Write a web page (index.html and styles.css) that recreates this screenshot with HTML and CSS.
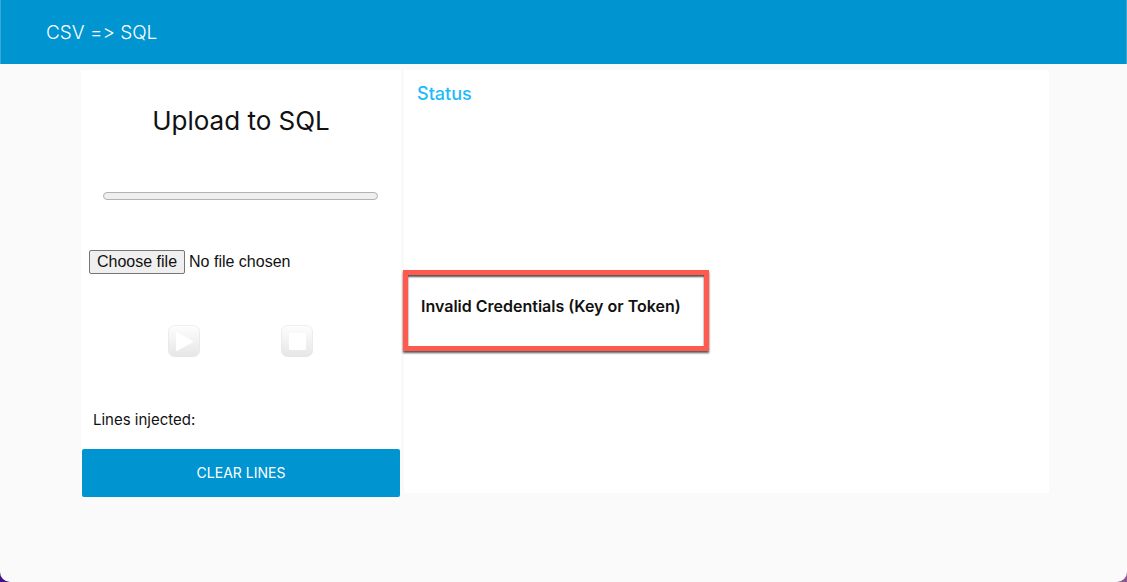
FILE: index.html
```html
<!DOCTYPE html>
<html lang="en">
<head>
<meta charset="utf-8">
<meta name="viewport" content="width=device-width, initial-scale=1">
<title>CSV =&gt; SQL</title>
<link rel="stylesheet" href="styles.css">
</head>
<body>
<div class="window">
  <header class="toolbar"><span class="toolbar-title">CSV =&gt; SQL</span></header>
  <main class="layout">
    <section class="panel upload">
      <h1 class="upload-title">Upload to SQL</h1>
      <div class="progress" role="progressbar" aria-label="Upload progress"></div>
      <div class="file-row">
        <input class="file-input" type="file" id="csv-file">
        <label class="file-button" for="csv-file">Choose file</label>
        <span class="file-name">No file chosen</span>
      </div>
      <div class="controls">
        <button class="icon-button" type="button" aria-label="Start">
          <svg width="32" height="32" viewBox="0 0 32 32">
            <defs>
              <linearGradient id="face" x1="0" y1="0" x2="0" y2="1"><stop offset="0" stop-color="#fefefe"/><stop offset="1" stop-color="#e6e6e6"/></linearGradient>
              <linearGradient id="edge" x1="0" y1="0" x2="0" y2="1"><stop offset="0" stop-color="#eeeeee"/><stop offset="1" stop-color="#e6e6e6"/></linearGradient>
            </defs>
            <rect x="0.5" y="0.5" width="31" height="31" rx="6" fill="url(#face)" stroke="url(#edge)"/>
            <path d="M9 8 L24 16.500 L9 25 Z" fill="#fff" stroke="#fff" stroke-width="2" stroke-linejoin="round"/>
          </svg>
        </button>
        <button class="icon-button" type="button" aria-label="Stop">
          <svg width="32" height="32" viewBox="0 0 32 32">
            <rect x="0.5" y="0.5" width="31" height="31" rx="6" fill="url(#face)" stroke="url(#edge)"/>
            <rect x="8" y="8" width="17" height="17" rx="1" fill="#fff"/>
          </svg>
        </button>
      </div>
      <p class="lines">Lines injected:</p>
      <button class="clear-button" type="button">CLEAR LINES</button>
    </section>
    <section class="panel status">
      <h2 class="status-title">Status</h2>
      <p class="message" role="alert">Invalid Credentials (Key or Token)</p>
    </section>
  </main>
</div>
</body>
</html>
```
FILE: styles.css
```css
* { box-sizing: border-box; }
body {
  margin: 0;
  background: linear-gradient(90deg, #43108a 50%, #8b5590 50%);
  color: #111;
  font: 16px/24px Inter, "Liberation Sans", sans-serif;
}
.window {
  min-height: 100vh;
  background: #fafafa;
  border-radius: 0 0 10px 10px;
}
.toolbar {
  display: flex;
  align-items: center;
  height: 64px;
  padding: 2px 45px 0;
  background: #0094d0;
  border: solid #36a8d9;
  border-width: 0 1px;
  color: #fff;
}
.toolbar-title {
  font-size: 19px;
  font-weight: 300;
  font-feature-settings: "calt" 0;
}
.layout {
  display: grid;
  grid-template-columns: 320fr 645fr;
  align-items: start;
  gap: 3px;
  padding: 6px 78px 0 81px;
}
.panel { background: #fff; }
.upload { display: flex; flex-direction: column; height: 423px; }
.upload-title {
  margin: 34px 0 0;
  font-size: 26px;
  line-height: 34px;
  font-weight: 400;
  text-align: center;
}
.progress {
  flex: none;
  height: 8px;
  margin: 54px 23px 0 22px;
  border: 1px solid #b2b2b2;
  border-radius: 4px;
  background: #efefef;
}
.file-row {
  display: flex;
  align-items: center;
  gap: 4px;
  margin: 50px 8px 0;
  font-family: "Liberation Sans", sans-serif;
}
.file-input {
  position: absolute;
  width: 1px;
  height: 1px;
  opacity: 0;
}
.file-button {
  padding: 0 7px;
  border: 1px solid #767676;
  border-radius: 2px;
  background: #efefef;
  line-height: 22px;
}
.controls {
  display: flex;
  justify-content: center;
  gap: 81px;
  margin-top: 51px;
  padding-right: 2px;
}
.icon-button { padding: 0; border: 0; background: none; }
.icon-button svg { display: block; }
.lines { margin: 51px 12px 0; font-size: 15px; }
.clear-button {
  flex: none;
  height: 48px;
  margin: 17px 1px 0 1px;
  border: 0;
  border-radius: 2px;
  background: #0094d0;
  color: #fff;
  font: 14px/20px Inter, sans-serif;
}
.status { height: 423px; }
.status-title {
  margin: 0;
  padding: 12px 13px;
  color: #1cbbfa;
  font-size: 18px;
  line-height: 24px;
  font-weight: 500;
}
.message {
  width: fit-content;
  margin: 152px 0 0 -1px;
  padding: 19px 23px 28px 13px;
  border: 5px solid #ff5a4d;
  box-shadow: 0 2px 2px #555, inset 0 2px 2px #555;
  font-size: 16px;
  font-weight: 600;
}
```
